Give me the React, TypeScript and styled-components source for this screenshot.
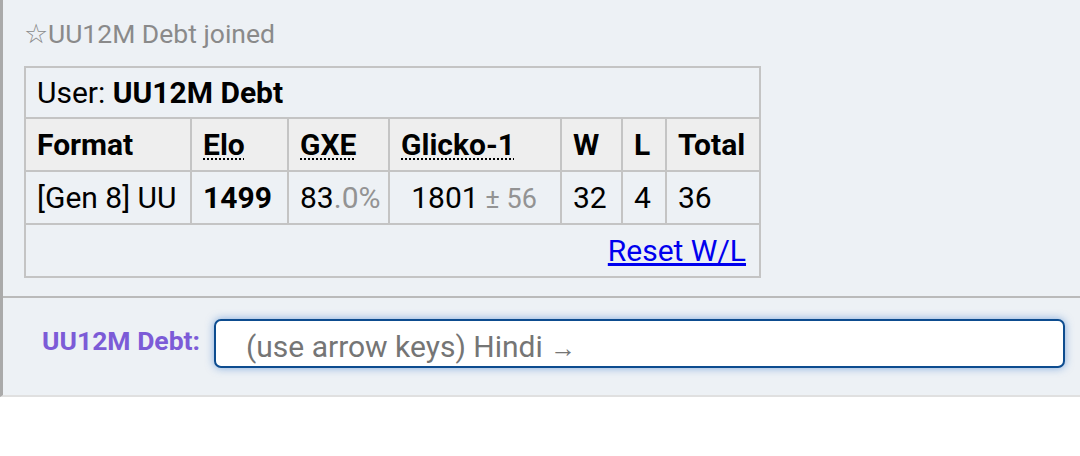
import styled, { createGlobalStyle } from 'styled-components';

const GlobalStyle = createGlobalStyle`
  body {
    margin: 0;
    background: #ffffff;
    font-family: Roboto, "Liberation Sans", sans-serif;
  }
`;

interface Rating {
  format: string;
  elo: number;
  gxe: string;
  glicko: number;
  deviation: number;
  wins: number;
  losses: number;
}

const rating: Rating = {
  format: '[Gen 8] UU',
  elo: 1499,
  gxe: '83',
  glicko: 1801,
  deviation: 56,
  wins: 32,
  losses: 4,
};

const columns = [166, 97, 101, 172, 61, 44, 94];

export default function App() {
  return (
    <>
      <GlobalStyle />
      <ChatPanel>
        <Log>
          <Notice>☆UU12M Debt joined</Notice>
          <LadderTable>
            <colgroup>
              {columns.map((w, i) => (
                <col key={i} style={{ width: w }} />
              ))}
            </colgroup>
            <tbody>
              <tr>
                <UserCell colSpan={7}>
                  User: <strong>UU12M Debt</strong>
                </UserCell>
              </tr>
              <tr>
                <HeadCell>Format</HeadCell>
                <HeadCell>
                  <Abbr title="Elo rating">Elo</Abbr>
                </HeadCell>
                <HeadCell>
                  <Abbr title="user's percentage chance of winning a random battle">GXE</Abbr>
                </HeadCell>
                <HeadCell>
                  <Abbr title="Glicko-1 rating system: rating±deviation">Glicko-1</Abbr>
                </HeadCell>
                <HeadCell>W</HeadCell>
                <HeadCell>L</HeadCell>
                <HeadCell>Total</HeadCell>
              </tr>
              <tr>
                <Cell>{rating.format}</Cell>
                <Cell>
                  <strong>{rating.elo}</strong>
                </Cell>
                <Cell>
                  {rating.gxe}
                  <Faint>.0%</Faint>
                </Cell>
                <Cell $align="center">
                  {rating.glicko}
                  <Faint $small> ± {rating.deviation}</Faint>
                </Cell>
                <Cell>{rating.wins}</Cell>
                <Cell>{rating.losses}</Cell>
                <Cell>{rating.wins + rating.losses}</Cell>
              </tr>
              <tr>
                <Cell colSpan={7} $align="right">
                  <ResetLink href="#">Reset W/L</ResetLink>
                </Cell>
              </tr>
            </tbody>
          </LadderTable>
        </Log>
        <InputBar>
          <UserLabel>UU12M Debt:</UserLabel>
          <TextBox>
            (use arrow keys) Hindi <Arrow>→</Arrow>
          </TextBox>
        </InputBar>
      </ChatPanel>
    </>
  );
}

const ChatPanel = styled.div`
  border-left: 3px solid #aaaaaa;
  border-bottom: 2px solid #e0e0e0;
  background: #edf1f5;
`;

const Log = styled.div`
  height: 296px;
  box-sizing: border-box;
  padding: 18px 0 0 21px;
`;

const Notice = styled.div`
  font-size: 26.5px;
  line-height: 31px;
  color: #8a8a8a;
  margin-bottom: 17px;
`;

const LadderTable = styled.table`
  table-layout: fixed;
  width: 737px;
  border-collapse: collapse;
  border: 2px solid #bdbdbd;
  font-size: 30px;
  color: #000;
`;

const UserCell = styled.th`
  text-align: left;
  font-weight: normal;
  height: 51px;
  padding: 0 13px 0 11px;
  border: 2px solid #c4c4c4;
  box-sizing: border-box;
  white-space: nowrap;
`;

const HeadCell = styled.th`
  text-align: left;
  height: 51px;
  padding: 0 13px 0 11px;
  background: #eeeeee;
  border: 2px solid #c4c4c4;
  white-space: nowrap;
`;

const Cell = styled.td<{ $align?: 'left' | 'center' | 'right' }>`
  text-align: ${({ $align }) => $align || 'left'};
  height: 51px;
  padding: 0 13px 0 11px;
  border: 2px solid #c4c4c4;
  white-space: nowrap;
`;

const Abbr = styled.abbr`
  text-decoration: underline dotted;
  text-decoration-thickness: 2px;
  text-underline-offset: 3px;
  cursor: help;
`;

const Faint = styled.small<{ $small?: boolean }>`
  color: #939393;
  font-size: ${({ $small }) => ($small ? '27px' : '30px')};
`;

const ResetLink = styled.a`
  color: #0000ee;
  text-decoration: underline;
`;

const InputBar = styled.div`
  display: flex;
  align-items: center;
  gap: 14px;
  box-sizing: border-box;
  height: 99px;
  padding: 0 15px 6px 39px;
  border-top: 2px solid #bababa;
`;

const UserLabel = styled.strong`
  font-size: 26.5px;
  color: #7c5bd7;
  white-space: nowrap;
  margin-top: -6px;
`;

const TextBox = styled.div`
  flex: 1;
  box-sizing: border-box;
  height: 49px;
  padding: 8px 0 0 30px;
  background: #ffffff;
  border: 2px solid #0d4c8f;
  border-radius: 7px;
  box-shadow: 0 0 8px rgba(40, 110, 200, 0.55);
  font-size: 30px;
  line-height: 36px;
  color: #757575;
  white-space: nowrap;
  overflow: hidden;
`;

const Arrow = styled.span`
  font-size: 26px;
`;
